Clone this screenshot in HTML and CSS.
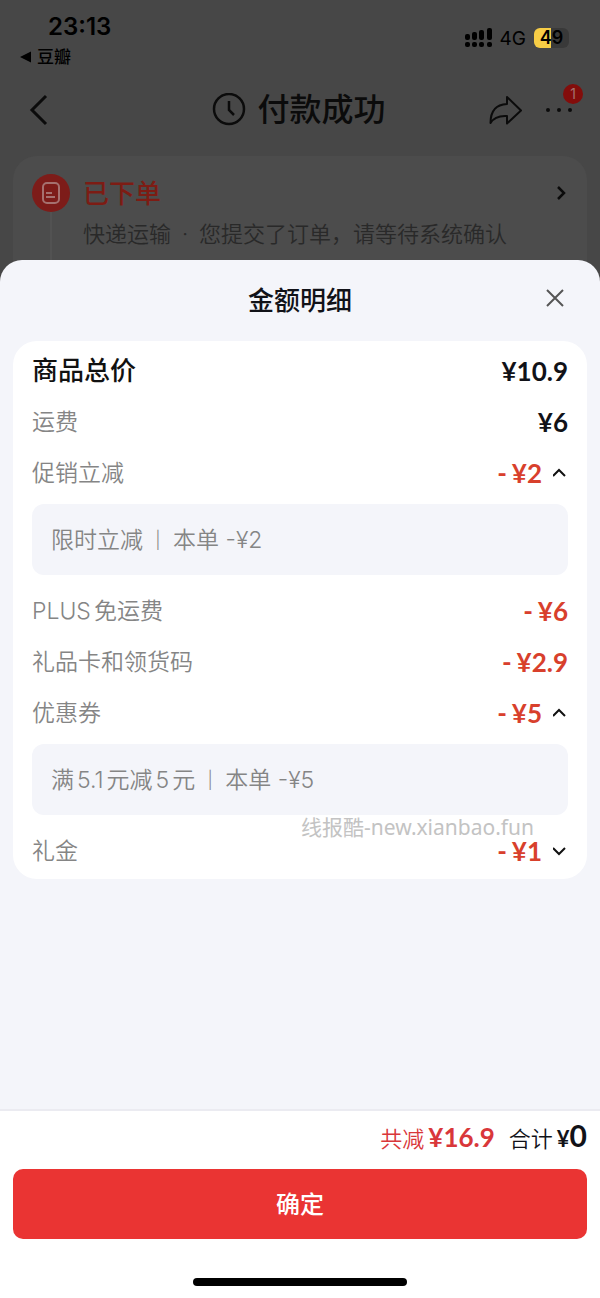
FILE: index.html
```html
<!DOCTYPE html>
<html lang="zh-CN">
<head>
  <meta charset="UTF-8" />
  <meta name="viewport" content="width=device-width, initial-scale=1" />
  <title>付款成功</title>
  <link rel="stylesheet" href="styles.css">
</head>
<body>

  <!-- 背景页面（变暗） -->
  <div class="page">
    <div class="status-bar">
      <div class="status-left">
        <div class="time">23:13</div>
        <a class="back-app" href="#">
          <svg width="11" height="12" viewBox="0 0 11 12"><path d="M0 6L11 0.500V11.500Z" /></svg>
          豆瓣
        </a>
      </div>
      <div class="status-right">
        <svg class="signal" width="27" height="20" viewBox="0 0 27 20">
          <rect x="0" y="6" width="5" height="6" rx="2" />
          <rect x="7" y="4" width="5" height="8" rx="2" />
          <rect x="14" y="2" width="5" height="10" rx="2" />
          <rect x="22" y="0" width="5" height="12" rx="2" />
          <rect x="0" y="14" width="5" height="5" rx="2" />
          <rect x="7" y="14" width="5" height="5" rx="2" />
          <rect x="14" y="14" width="5" height="5" rx="2" />
          <rect x="22" y="14" width="5" height="5" rx="2" />
        </svg>
        <span class="network">4G</span>
        <span class="battery">49</span>
      </div>
    </div>

    <div class="navbar">
      <button class="icon-btn" aria-label="返回">
        <svg width="20" height="32" viewBox="0 0 20 32"><path d="M18 2L4 16L18 30" stroke-width="3" /></svg>
      </button>
      <h1 class="nav-title">
        <svg width="34" height="34" viewBox="0 0 34 34">
          <circle cx="17" cy="16" r="15" stroke-width="2.500" />
          <path d="M17 8V17L22 22" stroke-width="2.500" />
        </svg>
        付款成功
      </h1>
      <div class="nav-actions">
        <button class="icon-btn" aria-label="分享">
          <svg width="34" height="30" viewBox="0 0 34 30">
            <path d="M18 2L32 15.500L18 28.500V21C10 20.500 5 22 1.500 28C1.500 16.500 7 9.500 18 9Z" stroke-width="2" stroke-linejoin="round" />
          </svg>
        </button>
        <button class="icon-btn more" aria-label="更多">
          <svg width="28" height="6" viewBox="0 0 28 6">
            <g fill="#0b0b0b" stroke="none"><circle cx="3" cy="3" r="2" /><circle cx="14" cy="3" r="2" /><circle cx="25" cy="3" r="2" /></g>
          </svg>
          <span class="badge">1</span>
        </button>
      </div>
    </div>

    <div class="order-card">
      <div class="timeline">
        <div class="step-icon">
          <svg width="20" height="24" viewBox="0 0 20 24">
            <rect x="2" y="2" width="16" height="20" rx="4" stroke-width="2" />
            <path d="M5 12H11M5 16H14" stroke-width="2" />
          </svg>
        </div>
        <div class="step-line"></div>
      </div>
      <div class="order-text">
        <h2>已下单</h2>
        <p>快递运输<span class="dot">·</span>您提交了订单，请等待系统确认</p>
      </div>
      <svg class="order-arrow" width="10" height="16" viewBox="0 0 10 16"><path d="M2 2L8 8L2 14" stroke-width="2.500" /></svg>
    </div>
  </div>

  <!-- 金额明细弹层 -->
  <div class="sheet" role="dialog" aria-labelledby="sheetTitle">
    <div class="sheet-header">
      <h2 id="sheetTitle">金额明细</h2>
      <button class="icon-btn close" aria-label="关闭">
        <svg width="18" height="18" viewBox="0 0 18 18"><path d="M1 1L17 17M17 1L1 17" stroke-width="2" /></svg>
      </button>
    </div>

    <div class="detail-card">
      <div class="row total">
        <span class="label">商品总价</span>
        <span class="price">¥10.9</span>
      </div>
      <div class="row">
        <span class="label">运费</span>
        <span class="price">¥6</span>
      </div>
      <div class="row">
        <span class="label">促销立减</span>
        <button class="price minus toggle" aria-expanded="true"><span class="sign">-</span>¥2
          <svg width="15" height="10" viewBox="0 0 15 10"><path d="M0 8L6 2L12 8" stroke-width="2" /></svg>
        </button>
      </div>
      <div class="sub-box">限时立减<span class="bar">|</span>本单 -¥2</div>
      <div class="row">
        <span class="label">PLUS<span class="cjk">免运费</span></span>
        <span class="price minus"><span class="sign">-</span>¥6</span>
      </div>
      <div class="row">
        <span class="label">礼品卡和领货码</span>
        <span class="price minus"><span class="sign">-</span>¥2.9</span>
      </div>
      <div class="row">
        <span class="label">优惠券</span>
        <button class="price minus toggle" aria-expanded="true"><span class="sign">-</span>¥5
          <svg width="15" height="10" viewBox="0 0 15 10"><path d="M0 8L6 2L12 8" stroke-width="2" /></svg>
        </button>
      </div>
      <div class="sub-box">满<span class="num">5.1</span>元减<span class="num">5</span>元<span class="bar">|</span>本单 -¥5</div>
      <div class="row">
        <span class="label">礼金</span>
        <button class="price minus toggle" aria-expanded="false"><span class="sign">-</span>¥1
          <svg width="15" height="10" viewBox="0 0 15 10"><path d="M0 2L6 8L12 2" stroke-width="2" /></svg>
        </button>
      </div>
      <span class="watermark">线报酷-new.xianbao.fun</span>
    </div>

    <div class="footer">
      <div class="summary">
        <span class="saved">共减<b>¥16.9</b></span>
        <span class="payable">合计<b>¥<span class="big">0</span></b></span>
      </div>
      <button class="confirm">确定</button>
      <div class="home-indicator"></div>
    </div>
  </div>

</body>
</html>
```
FILE: styles.css
```css
* {
  margin: 0;
  padding: 0;
  box-sizing: border-box;
}
body {
  font-family: Inter, 'Noto Sans CJK SC', sans-serif;
  background-color: #474747;
  color: #111218;
  min-height: 100vh;
  display: flex;
  flex-direction: column;
}
svg {
  display: block;
  fill: none;
  stroke: currentColor;
  flex-shrink: 0;
}
button {
  font-family: inherit;
  color: inherit;
  background: none;
  border: none;
  cursor: pointer;
}
h1, h2 {
  font-weight: 500;
}

/* --- 状态栏 --- */
.page {
  color: #0b0b0b;
}
.status-bar {
  display: flex;
  justify-content: space-between;
  height: 72px;
  padding: 12px 31px 0 20px;
  color: #000;
}
.time {
  font-size: 24px;
  line-height: 30px;
  font-weight: 600;
  padding-left: 28px;
}
.back-app {
  display: flex;
  align-items: center;
  gap: 6px;
  font-size: 17px;
  line-height: 30px;
  font-weight: 500;
  color: #000;
  text-decoration: none;
}
.back-app svg,
.signal {
  fill: #000;
  stroke: none;
}
.status-right {
  display: flex;
  align-items: center;
  gap: 8px;
  height: 52px;
}
.network {
  font-size: 19px;
}
.battery {
  width: 35px;
  height: 20px;
  border-radius: 6px;
  background: linear-gradient(to right, #f7cd46 50%, #393939 50%);
  font-size: 18px;
  line-height: 20px;
  font-weight: 600;
  text-align: center;
}

/* --- 导航栏 --- */
.navbar {
  display: grid;
  grid-template-columns: 1fr auto 1fr;
  align-items: center;
  height: 76px;
  padding: 0 27px 0 28px;
}
.icon-btn {
  justify-self: start;
}
.nav-title {
  display: flex;
  align-items: center;
  gap: 11px;
  padding-right: 3px;
  font-size: 32px;
  line-height: 48px;
}
.nav-actions {
  display: flex;
  align-items: center;
  justify-content: flex-end;
  gap: 22px;
}
.more {
  position: relative;
}
.badge {
  position: absolute;
  right: -10px;
  bottom: 9px;
  width: 20px;
  height: 20px;
  border-radius: 50%;
  background: #830d0b;
  color: #a37270;
  font-size: 14px;
  line-height: 20px;
}

/* --- 订单状态 --- */
.order-card {
  display: flex;
  gap: 13px;
  margin: 8px 13px 0;
  padding: 18px 21px 0 19px;
  border-radius: 24px 24px 0 0;
  background: #4c4c4c;
}
.timeline {
  display: flex;
  flex-direction: column;
  align-items: center;
}
.step-icon {
  display: grid;
  place-items: center;
  width: 38px;
  height: 38px;
  border-radius: 50%;
  background: #7d1c19;
  color: #a5716f;
}
.step-line {
  flex: 1;
  width: 2px;
  background: #525252;
}
.order-text {
  flex: 1;
  padding-bottom: 32px;
}
.order-text h2 {
  font-size: 26px;
  line-height: 40px;
  color: #7d1c14;
}
.order-text p {
  font-size: 22px;
  line-height: 40px;
  font-weight: 350;
  color: #292929;
}
.dot {
  display: inline-block;
  width: 28px;
  text-align: center;
}
.order-arrow {
  margin-top: 11px;
}

/* --- 弹层 --- */
.sheet {
  position: relative;
  flex: 1;
  display: flex;
  flex-direction: column;
  margin-top: -26px;
  border-radius: 22px 22px 0 0;
  background: #f4f5fa;
  overflow: hidden;
}
.sheet-header {
  display: grid;
  grid-template-columns: 1fr auto 1fr;
  align-items: center;
  height: 81px;
  padding: 0 36px;
}
.sheet-header h2 {
  grid-column: 2;
  font-size: 26px;
  line-height: 38px;
}
.close {
  justify-self: end;
  color: #555;
  padding-bottom: 6px;
}
.detail-card {
  position: relative;
  margin: 0 13px;
  padding: 4px 19px 3px;
  border-radius: 24px;
  background: #fff;
}
.row {
  display: flex;
  align-items: center;
  justify-content: space-between;
  height: 51px;
}
.label {
  font-size: 23px;
  line-height: 34px;
  font-weight: 350;
  color: #858585;
}
.cjk {
  margin-left: 3px;
}
.total .label {
  font-size: 26px;
  font-weight: 500;
  color: #111;
}
.price {
  display: flex;
  align-items: center;
  font-family: Lato, sans-serif;
  font-size: 26px;
  line-height: 24px;
  font-weight: 700;
}
.minus {
  color: #d8402c;
}
.sign {
  margin-right: 5px;
}
.toggle svg {
  margin-left: 11px;
  color: #111;
}
.sub-box {
  display: flex;
  align-items: center;
  height: 71px;
  margin: 6px 0 10px;
  padding: 0 19px;
  border-radius: 12px;
  background: #f4f5fa;
  font-size: 23px;
  line-height: 34px;
  font-weight: 350;
  color: #858585;
}
.bar {
  width: 30px;
  font-size: 17px;
  text-align: center;
}
.num {
  margin: 0 3px;
}
.watermark {
  position: absolute;
  right: 53px;
  bottom: 40px;
  font-family: 'Noto Sans', 'Noto Sans CJK SC', sans-serif;
  font-size: 21px;
  line-height: 24px;
  color: #c3c3c3;
}

/* --- 底部 --- */
.footer {
  margin-top: auto;
  padding: 0 13px 12px;
  border-top: 2px solid #ebebf1;
  background: #fff;
}
.summary {
  display: flex;
  justify-content: flex-end;
  align-items: baseline;
  gap: 14px;
  height: 50px;
  margin-bottom: 8px;
  font-size: 22px;
  line-height: 48px;
  font-weight: 350;
}
.summary b {
  margin-left: 4px;
  font-family: Lato, sans-serif;
  font-weight: 700;
}
.saved {
  color: #d9373a;
}
.saved b {
  font-size: 26px;
}
.big {
  font-size: 30px;
}
.confirm {
  display: block;
  width: 100%;
  height: 70px;
  padding-bottom: 3px;
  border-radius: 10px;
  background: #ea3433;
  color: #fff;
  font-size: 24px;
  font-weight: 500;
}
.home-indicator {
  width: 214px;
  height: 8px;
  margin: 39px auto 0;
  border-radius: 4px;
  background: #000;
}
```
